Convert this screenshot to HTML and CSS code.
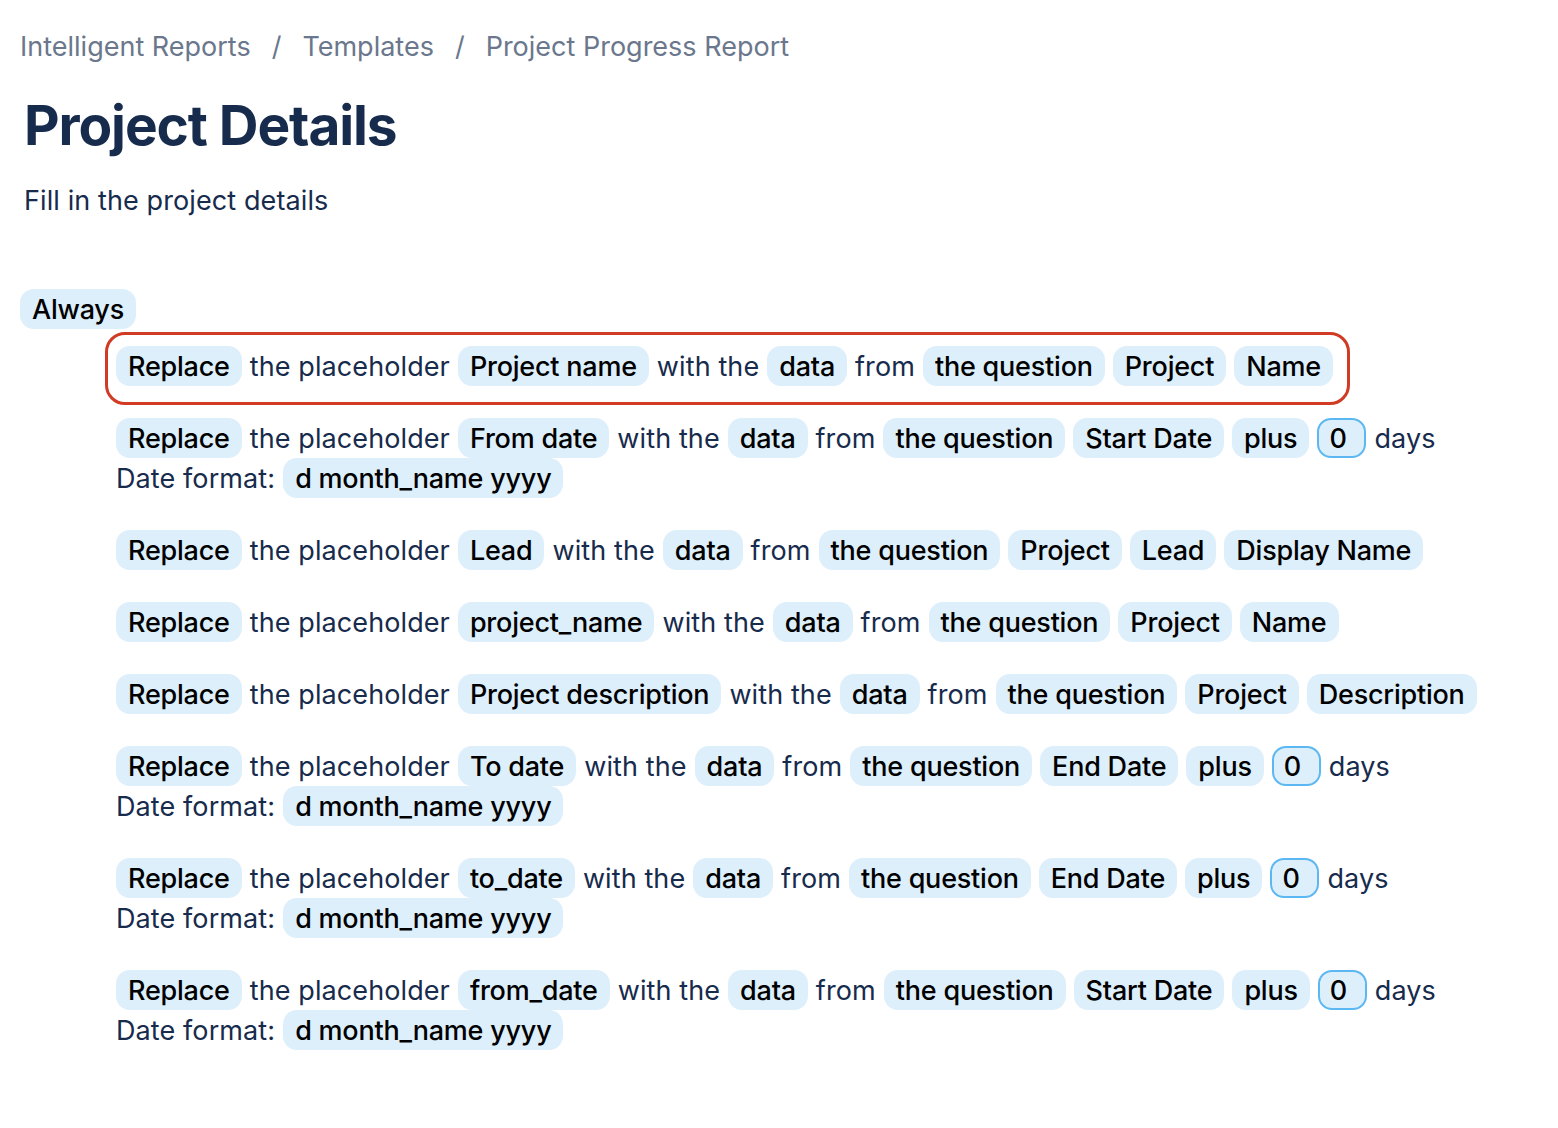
FILE: index.html
```html
<!DOCTYPE html>
<html lang="en">
<head>
<meta charset="utf-8">
<title>Project Details</title>
<link rel="stylesheet" href="styles.css">
</head>
<body>
<div class="page">
  <nav class="breadcrumb">
    <span>Intelligent Reports</span><span class="sep">/</span><span>Templates</span><span class="sep">/</span><span>Project Progress Report</span>
  </nav>
  <h1 class="title">Project Details</h1>
  <p class="subtitle">Fill in the project details</p>

  <div class="group">
    <span class="chip">Always</span>
    <div class="rules">
      <div class="rule highlighted">
        <div class="line"><span class="chip">Replace</span><span>the placeholder</span><span class="chip">Project name</span><span>with the</span><span class="chip">data</span><span>from</span><span class="chip">the question</span><span class="chip">Project</span><span class="chip">Name</span></div>
      </div>
      <div class="rule">
        <div class="line"><span class="chip">Replace</span><span>the placeholder</span><span class="chip">From date</span><span>with the</span><span class="chip">data</span><span>from</span><span class="chip">the question</span><span class="chip">Start Date</span><span class="chip">plus</span><span class="chip num">0</span><span>days</span></div>
        <div class="line fmt"><span>Date format:</span><span class="chip">d month_name yyyy</span></div>
      </div>
      <div class="rule">
        <div class="line"><span class="chip">Replace</span><span>the placeholder</span><span class="chip">Lead</span><span>with the</span><span class="chip">data</span><span>from</span><span class="chip">the question</span><span class="chip">Project</span><span class="chip">Lead</span><span class="chip">Display Name</span></div>
      </div>
      <div class="rule">
        <div class="line"><span class="chip">Replace</span><span>the placeholder</span><span class="chip">project_name</span><span>with the</span><span class="chip">data</span><span>from</span><span class="chip">the question</span><span class="chip">Project</span><span class="chip">Name</span></div>
      </div>
      <div class="rule">
        <div class="line"><span class="chip">Replace</span><span>the placeholder</span><span class="chip">Project description</span><span>with the</span><span class="chip">data</span><span>from</span><span class="chip">the question</span><span class="chip">Project</span><span class="chip">Description</span></div>
      </div>
      <div class="rule">
        <div class="line"><span class="chip">Replace</span><span>the placeholder</span><span class="chip">To date</span><span>with the</span><span class="chip">data</span><span>from</span><span class="chip">the question</span><span class="chip">End Date</span><span class="chip">plus</span><span class="chip num">0</span><span>days</span></div>
        <div class="line fmt"><span>Date format:</span><span class="chip">d month_name yyyy</span></div>
      </div>
      <div class="rule">
        <div class="line"><span class="chip">Replace</span><span>the placeholder</span><span class="chip">to_date</span><span>with the</span><span class="chip">data</span><span>from</span><span class="chip">the question</span><span class="chip">End Date</span><span class="chip">plus</span><span class="chip num">0</span><span>days</span></div>
        <div class="line fmt"><span>Date format:</span><span class="chip">d month_name yyyy</span></div>
      </div>
      <div class="rule">
        <div class="line"><span class="chip">Replace</span><span>the placeholder</span><span class="chip">from_date</span><span>with the</span><span class="chip">data</span><span>from</span><span class="chip">the question</span><span class="chip">Start Date</span><span class="chip">plus</span><span class="chip num">0</span><span>days</span></div>
        <div class="line fmt"><span>Date format:</span><span class="chip">d month_name yyyy</span></div>
      </div>
    </div>
  </div>
</div>
</body>
</html>
```

FILE: styles.css
```css
* { box-sizing: border-box; }

body {
  margin: 0;
  background: #ffffff;
  font-family: Inter, "Noto Sans", "Liberation Sans", sans-serif;
  color: #172b4d;
}

.page {
  padding: 28px 20px 40px 20px;
}

.breadcrumb {
  display: flex;
  gap: 21px;
  font-size: 27px;
  line-height: 38px;
  letter-spacing: 0;
  color: #6b778c;
}

.title {
  margin: 26px 0 0 4px;
  font-size: 55px;
  line-height: 66px;
  font-weight: 700;
  letter-spacing: -1.1px;
  color: #172b4d;
}

.subtitle {
  margin: 25px 0 0 4px;
  font-size: 27px;
  line-height: 36px;
  letter-spacing: 0.1px;
  color: #172b4d;
}

.group {
  margin-top: 70px;
  font-size: 27px;
  letter-spacing: 0.1px;
}

.chip {
  display: inline-flex;
  align-items: center;
  height: 40px;
  padding: 0 12px;
  border-radius: 14px;
  background: #ddeffb;
  color: #000000;
  font-weight: 500;
  letter-spacing: -0.22px;
  white-space: nowrap;
}

.chip.num {
  border: 2px solid #5cb8f2;
  padding: 0 10px;
  min-width: 49px;
  justify-content: flex-start;
}

.rules {
  margin-top: 17px;
  margin-left: 96px;
  display: flex;
  flex-direction: column;
  align-items: flex-start;
  gap: 32px;
}

.rule {
  display: flex;
  flex-direction: column;
  position: relative;
}

.line {
  display: flex;
  align-items: center;
  flex-wrap: wrap;
  gap: 0 8px;
  height: 40px;
  white-space: nowrap;
}

.highlighted::after {
  content: "";
  position: absolute;
  top: -14px;
  left: -11px;
  right: -17px;
  bottom: -19px;
  border: 3px solid #d13a23;
  border-radius: 20px;
  pointer-events: none;
}
```
